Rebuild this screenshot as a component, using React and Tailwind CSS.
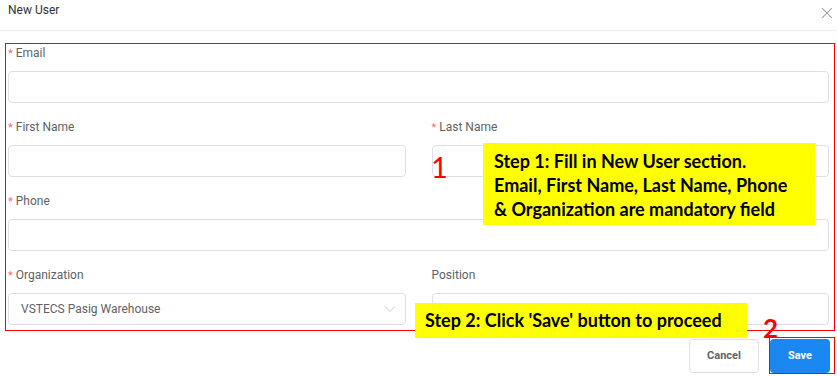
import { X, ChevronDown } from 'lucide-react';

function Field({ label, required, children }) {
  return (
    <div className="mb-[14px]">
      <div className="h-[20px] leading-[20px] text-[12px] text-[#606266]">
        {required && <span className="text-[#f56c6c] mr-[3px] text-[11px]">*</span>}
        {label}
      </div>
      <div className="mt-[8px]">{children}</div>
    </div>
  );
}

function TextInput() {
  return (
    <input
      type="text"
      readOnly
      className="block w-full h-[32px] rounded-[4px] border border-[#dcdfe6] bg-white px-3 text-[12px] outline-none"
    />
  );
}

export default function App() {
  return (
    <div className="relative w-[837px] h-[376px] overflow-hidden bg-white font-['Roboto',sans-serif]">
      {/* header */}
      <div className="flex h-[31px] items-start justify-between border-b border-[#ebeef5] pl-2 pr-[1px]">
        <span className="mt-[2px] leading-[16px] text-[12px] text-[#303133]">New User</span>
        <X size={18} strokeWidth={1.4} className="mt-[4px] text-[#909399]" />
      </div>

      {/* form */}
      <div className="px-2 pt-[12px]">
        <Field label="Email" required>
          <TextInput />
        </Field>
        <div className="grid grid-cols-2 gap-x-[26px]">
          <Field label="First Name" required>
            <TextInput />
          </Field>
          <Field label="Last Name" required>
            <TextInput />
          </Field>
        </div>
        <Field label="Phone" required>
          <TextInput />
        </Field>
        <div className="grid grid-cols-2 gap-x-[26px]">
          <Field label="Organization" required>
            <div className="flex h-[32px] items-center justify-between rounded-[4px] border border-[#dcdfe6] pl-[12px] pr-[5px] text-[12px] text-[#606266]">
              <span>VSTECS Pasig Warehouse</span>
              <ChevronDown size={20} strokeWidth={1.1} className="text-[#c0c4cc]" />
            </div>
          </Field>
          <Field label="Position">
            <TextInput />
          </Field>
        </div>
      </div>

      {/* footer */}
      <div className="flex justify-end gap-[11px] pr-[7px]">
        <button className="h-[34px] w-[70px] rounded-[4px] border border-[#dcdfe6] bg-white text-[11px] font-bold text-[#606266]">
          Cancel
        </button>
        <button className="h-[34px] w-[60px] rounded-[4px] bg-[#1a88f0] text-[11px] font-bold text-white">
          Save
        </button>
      </div>

      {/* annotations */}
      <div className="pointer-events-none absolute left-[5px] top-[43px] h-[288px] w-[830px] border border-[#ff0000]" />
      <div className="pointer-events-none absolute left-[769px] top-[337px] h-[37px] w-[66px] border border-[#ff0000]" />
      <div className="absolute left-[431px] top-[152px] font-['Lato',sans-serif] text-[29px] leading-none text-[#ff0000]">1</div>
      <div className="absolute left-[763px] top-[315px] font-['Lato',sans-serif] text-[26px] font-bold leading-none text-[#ff0000]">2</div>
      <div className="absolute left-[483px] top-[143px] h-[82px] w-[332px] bg-[#ffff00] pl-[11px] pt-[6px] font-['Lato',sans-serif] text-[18px] font-bold leading-[24px] text-black">
        Step 1: Fill in New User section.
        <br />
        Email, First Name, Last Name, Phone
        <br />
        &amp; Organization are mandatory field
      </div>
      <div className="absolute left-[415px] top-[303px] h-[35px] w-[332px] bg-[#ffff00] pl-[10px] font-['Lato',sans-serif] text-[18px] font-bold leading-[35px] text-black">
        Step 2: Click 'Save' button to proceed
      </div>
    </div>
  );
}
